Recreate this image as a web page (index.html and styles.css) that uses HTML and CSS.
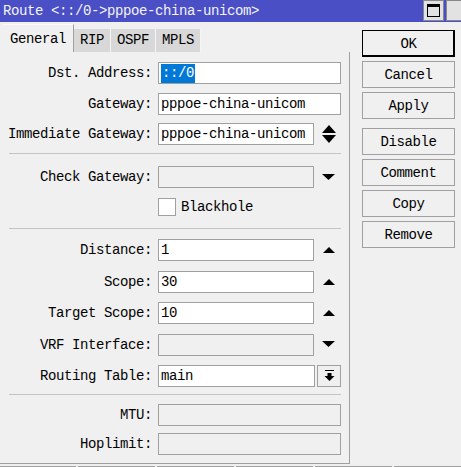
FILE: index.html
```html
<!DOCTYPE html>
<html lang="en">
<head>
<meta charset="UTF-8" />
<title>Route</title>
<link rel="stylesheet" href="styles.css">
</head>
<body>

<div class="titlebar">
  <span class="title">Route &lt;::/0-&gt;pppoe-china-unicom&gt;</span>
  <div class="winbtns">
    <span class="wbtn"><span class="maxicon"></span></span>
    <span class="wbtn"></span>
  </div>
</div>

<div class="main">
  <div class="left">
    <div class="tabs">
      <span class="tab active">General</span>
      <span class="tab">RIP</span>
      <span class="tab">OSPF</span>
      <span class="tab">MPLS</span>
    </div>

    <div class="panel">
      <div class="section first">
        <div class="row">
          <span class="lbl">Dst. Address:</span>
          <span class="field wide"><span class="sel">::/0</span></span>
        </div>
        <div class="row">
          <span class="lbl">Gateway:</span>
          <span class="field wide">pppoe-china-unicom</span>
        </div>
        <div class="row">
          <span class="lbl">Immediate Gateway:</span>
          <span class="field short">pppoe-china-unicom</span>
          <span class="slot">
            <svg width="14" height="19" viewBox="0 0 14 19"><path d="M7 0 L14 8 L0 8 Z M0 10 L14 10 L7 18 Z" fill="#000"/></svg>
          </span>
        </div>
      </div>

      <div class="sep"></div>

      <div class="section second">
        <div class="row">
          <span class="lbl">Check Gateway:</span>
          <span class="field short off"></span>
          <span class="slot">
            <svg width="13" height="7" viewBox="0 0 13 7"><path d="M0 0 L13 0 L6.5 6 Z" fill="#000"/></svg>
          </span>
        </div>
        <div class="checkrow">
          <span class="check"></span>
          <span>Blackhole</span>
        </div>
      </div>

      <div class="sep"></div>

      <div class="section third">
        <div class="row">
          <span class="lbl">Distance:</span>
          <span class="field short">1</span>
          <span class="slot">
            <svg width="12" height="6" viewBox="0 0 12 6"><path d="M6 0 L12 6 L0 6 Z" fill="#000"/></svg>
          </span>
        </div>
        <div class="row">
          <span class="lbl">Scope:</span>
          <span class="field short">30</span>
          <span class="slot">
            <svg width="12" height="6" viewBox="0 0 12 6"><path d="M6 0 L12 6 L0 6 Z" fill="#000"/></svg>
          </span>
        </div>
        <div class="row">
          <span class="lbl">Target Scope:</span>
          <span class="field short">10</span>
          <span class="slot">
            <svg width="12" height="6" viewBox="0 0 12 6"><path d="M6 0 L12 6 L0 6 Z" fill="#000"/></svg>
          </span>
        </div>
        <div class="row">
          <span class="lbl">VRF Interface:</span>
          <span class="field short off"></span>
          <span class="slot">
            <svg width="13" height="7" viewBox="0 0 13 7"><path d="M0 0 L13 0 L6.5 6 Z" fill="#000"/></svg>
          </span>
        </div>
        <div class="row">
          <span class="lbl">Routing Table:</span>
          <span class="field mid">main</span>
          <span class="dropbtn">
            <svg width="11" height="12" viewBox="0 0 11 12"><path d="M1 0.5 H10" stroke="#000" stroke-width="1"/><path d="M3.5 3 H7.5 V6 H10.5 L5.5 11 L0.5 6 H3.5 Z" fill="#000"/></svg>
          </span>
        </div>
      </div>

      <div class="sep"></div>

      <div class="section fourth">
        <div class="row">
          <span class="lbl">MTU:</span>
          <span class="field wide off"></span>
        </div>
        <div class="row">
          <span class="lbl">Hoplimit:</span>
          <span class="field wide off"></span>
        </div>
      </div>
    </div>
  </div>

  <div class="actions">
    <button class="btn default">OK</button>
    <button class="btn">Cancel</button>
    <button class="btn">Apply</button>
    <button class="btn group">Disable</button>
    <button class="btn">Comment</button>
    <button class="btn">Copy</button>
    <button class="btn">Remove</button>
  </div>
</div>

<div class="statusbar">
  <span class="cell"></span>
  <span class="cell"></span>
  <span class="cell"></span>
  <span class="cell"></span>
  <span class="cell"></span>
  <span class="cell"></span>
</div>

</body>
</html>
```

FILE: styles.css
```css
body {
  margin: 0;
  width: 461px;
  height: 467px;
  overflow: hidden;
  background: #f0f0f0;
  font-family: "Liberation Mono", "DejaVu Sans Mono", monospace;
  font-size: 14px;
  letter-spacing: -0.4px;
  color: #000;
}

/* barra de titulo */
.titlebar {
  height: 22px;
  background: #4a4fc6;
  display: flex;
  align-items: center;
  justify-content: space-between;
}
.title {
  color: #f4f4f4;
  padding-left: 3px;
}
.winbtns {
  display: flex;
  gap: 2px;
  margin-right: -6px;
  align-self: flex-start;
}
.wbtn {
  width: 21px;
  height: 21px;
  box-sizing: border-box;
  background: #e2e2e2;
  border: 1px solid #888;
  display: flex;
  align-items: center;
  justify-content: center;
}
.maxicon {
  width: 13px;
  height: 13px;
  box-sizing: border-box;
  border: 1px solid #000;
  border-top-width: 3px;
  background: #e2e2e2;
}

.main {
  display: flex;
}
.left {
  width: 350px;
}

/* abas */
.tabs {
  height: 30px;
  display: flex;
  align-items: flex-end;
  padding-left: 3px;
}
.tab {
  height: 23px;
  line-height: 23px;
  padding: 0 6px;
  background: #d8d8d8;
  border-right: 1px solid #f4f4f4;
}
.tab.active {
  height: 28px;
  line-height: 28px;
  padding: 0 7px 2px 7px;
  background: #f0f0f0;
  border-top: 1px solid #fafafa;
  border-right: 1px solid #a0a0a0;
  box-sizing: border-box;
}

/* painel */
.panel {
  border-right: 1px solid #a0a0a0;
  border-bottom: 1px solid #a0a0a0;
  padding: 10px 0 8px 0;
}
.section {
  display: flex;
  flex-direction: column;
}
.section.first {
  gap: 8.5px;
}
.section.second {
  margin-top: 12px;
}
.section.third {
  margin-top: 10px;
  gap: 9.5px;
}
.section.fourth {
  margin-top: 9px;
  gap: 7px;
}
.sep {
  height: 1px;
  background: #c4c4c4;
  margin-left: 9px;
  width: 332px;
}
.section.first + .sep {
  margin-top: 8px;
}
.section.second + .sep {
  margin-top: 12px;
}
.section.third + .sep {
  margin-top: 7px;
}

.row {
  display: flex;
  align-items: center;
  height: 22px;
}
.lbl {
  width: 152px;
  text-align: right;
  margin-right: 6px;
  white-space: nowrap;
}
.field {
  height: 22px;
  box-sizing: border-box;
  border: 1px solid #a0a0a0;
  background: #fff;
  padding-left: 2px;
  line-height: 20px;
  white-space: nowrap;
  overflow: hidden;
}
.field.off {
  background: #f0f0f0;
}
.field.wide {
  width: 183px;
}
.field.short {
  width: 156px;
}
.field.mid {
  width: 157px;
}
.sel {
  background: #0078d7;
  color: #fff;
  padding: 1px 1px 2px 1px;
}
.slot {
  width: 27px;
  display: flex;
  justify-content: center;
  padding-left: 1px;
}
.dropbtn {
  width: 24px;
  height: 22px;
  box-sizing: border-box;
  margin-left: 2px;
  border: 1px solid #a0a0a0;
  display: flex;
  align-items: center;
  justify-content: center;
}

.checkrow {
  display: flex;
  align-items: center;
  gap: 5px;
  margin-top: 10px;
  margin-left: 158px;
  height: 18px;
}
.check {
  width: 18px;
  height: 18px;
  box-sizing: border-box;
  border: 1px solid #a0a0a0;
  background: #fff;
}

/* botoes da direita */
.actions {
  margin-left: 12px;
  padding-top: 8px;
  display: flex;
  flex-direction: column;
  gap: 4px;
}
.btn {
  width: 93px;
  height: 27px;
  font-family: inherit;
  font-size: 14px;
  letter-spacing: -0.4px;
  color: #000;
  background: #f0f0f0;
  border: 1px solid #a0a0a0;
  padding: 0;
}
.btn.default {
  border: 1px solid #000;
  box-shadow: inset -1px -1px 0 #000;
}
.btn.group {
  margin-top: 5px;
}

/* barra de status */
.statusbar {
  margin-top: 2px;
  display: flex;
  gap: 2px;
  margin-left: -1px;
}
.cell {
  width: 75px;
  height: 20px;
  flex: none;
  border: 1px solid #a0a0a0;
}
```
